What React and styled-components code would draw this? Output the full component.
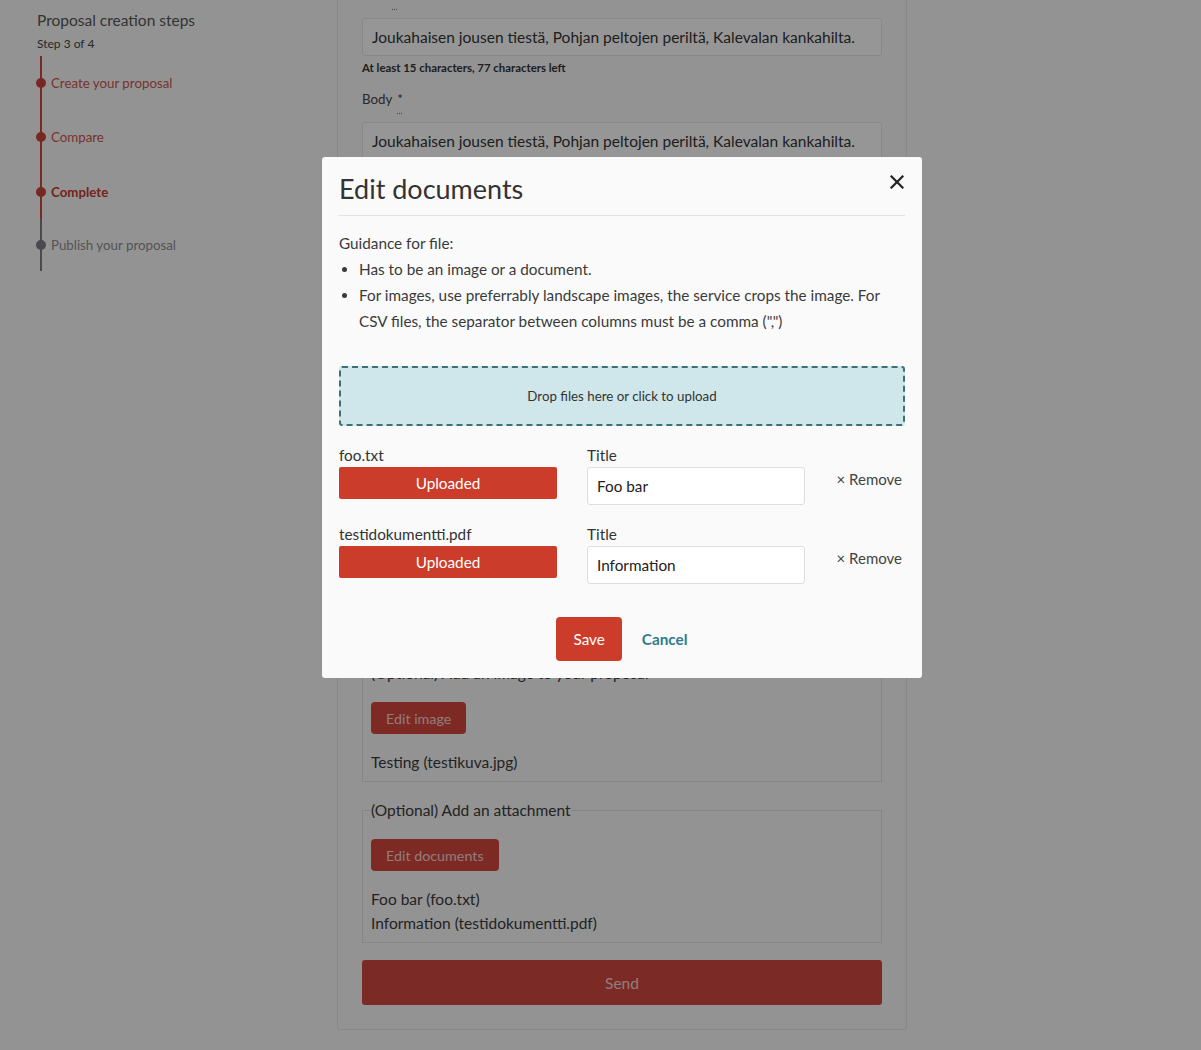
import React from "react";
import styled, { createGlobalStyle } from "styled-components";

const GlobalStyle = createGlobalStyle`
  html, body { margin: 0; padding: 0; }
  body {
    background: #f5f5f5;
    font-family: "Source Sans Pro", Lato, "Liberation Sans", sans-serif;
    color: #3a3a3a;
    overflow: hidden;
  }
  * { box-sizing: border-box; }
`;

const Page = styled.div`
  display: flex;
  align-items: flex-start;
  height: 1050px;
  padding-left: 37px;
`;

const Sidebar = styled.aside`
  width: 300px;
  padding-top: 9px;
`;

const SideTitle = styled.div`
  font-size: 15.5px;
  line-height: 22px;
  color: #555;
`;

const StepCount = styled.div`
  font-size: 12px;
  line-height: 16px;
  color: #444;
  margin-top: 5px;
  margin-bottom: 4px;
`;

const Steps = styled.ol`
  list-style: none;
  margin: 0;
  padding: 0;
`;

const Step = styled.li`
  position: relative;
  height: ${(p) => (p.$last ? "52px" : "54.3px")};
  display: flex;
  align-items: center;
  margin-left: 3px;
  padding-left: 9px;
  border-left: 2px solid ${(p) => (p.$done ? "#c9463d" : "#7a7a82")};
  font-size: 13.3px;
  font-weight: ${(p) => (p.$current ? 700 : 400)};
  color: ${(p) => (p.$current ? "#c23a30" : p.$done ? "#c8564c" : "#8c8c92")};
  &::before {
    content: "";
    position: absolute;
    left: -6px;
    top: 50%;
    margin-top: -5px;
    width: 10px;
    height: 10px;
    border-radius: 50%;
    background: ${(p) => (p.$done ? "#c8433a" : "#7a7a82")};
  }
`;

const Card = styled.main`
  width: 570px;
  margin-top: -40px;
  padding: 24px 24px 24px;
  background: #f5f5f5;
  border: 1px solid #e3e3e3;
  border-radius: 3px;
`;

const Label = styled.label`
  display: block;
  font-size: 13.3px;
  line-height: 20px;
  color: #444;
  margin-bottom: 13px;
  margin-top: ${(p) => (p.$spaced ? "13px" : "0")};
`;

const Req = styled.abbr`
  margin-left: 5px;
  text-decoration: underline dotted;
  text-underline-offset: 9px;
  text-decoration-color: #888;
`;

const TextInput = styled.div`
  height: ${(p) => (p.$tall ? "480px" : "38px")};
  padding: 9px 9px;
  background: #fbfbfb;
  border: 1px solid #e3e3e3;
  border-radius: 3px;
  font-size: 15.5px;
  line-height: 19px;
  color: #333;
`;

const Help = styled.div`
  margin-top: 4px;
  font-size: 11.4px;
  line-height: 16px;
  font-weight: 700;
  color: #333;
`;

const Fieldset = styled.fieldset`
  margin: ${(p) => (p.$first ? "39px" : "16px")} 0 0;
  padding: 17px 8px 7px;
  border: 1px solid #e0e0e0;
  min-width: 0;
`;

const Legend = styled.legend`
  padding: 0;
  font-size: 15.5px;
  line-height: 24px;
  color: #3a3a3a;
`;

const SmallButton = styled.button`
  display: inline-flex;
  align-items: center;
  height: 32px;
  padding: 0 15px;
  border: 0;
  border-radius: 4px;
  background: #d0463e;
  color: rgba(255, 255, 255, 0.75);
  font: inherit;
  font-size: 14.3px;
`;

const FileLine = styled.div`
  font-size: 15.5px;
  line-height: 24px;
  color: #3a3a3a;
  margin-top: ${(p) => (p.$gap ? "16px" : "0")};
`;

const SendButton = styled.button`
  display: block;
  width: 100%;
  height: 45px;
  margin-top: 17px;
  border: 0;
  border-radius: 3px;
  background: #cf463e;
  color: rgba(255, 255, 255, 0.75);
  font: inherit;
  font-size: 15.5px;
`;

const Overlay = styled.div`
  position: fixed;
  inset: 0;
  background: rgba(0, 0, 0, 0.4);
  z-index: 10;
`;

const Modal = styled.div`
  position: absolute;
  top: 157px;
  left: 322px;
  width: 600px;
  padding: 15px 17px 17px;
  background: #fafafa;
  border-radius: 3px;
  color: #3a3a3a;
`;

const ModalHeader = styled.div`
  padding-bottom: 9px;
  border-bottom: 1px solid #e2e2e2;
`;

const ModalTitle = styled.h2`
  margin: 0;
  font-size: 27px;
  line-height: 34px;
  font-weight: 400;
  color: #333;
`;

const CloseButton = styled.button`
  position: absolute;
  top: 17px;
  right: 17px;
  width: 16px;
  height: 16px;
  padding: 0;
  border: 0;
  background: none;
  color: #222;
  display: flex;
  align-items: center;
  justify-content: center;
`;

const Guidance = styled.div`
  margin-top: 14px;
  font-size: 15.3px;
  line-height: 26px;
`;

const Bullets = styled.ul`
  margin: 0;
  padding-left: 20px;
  li::marker { font-size: 15px; }
`;

const DropZone = styled.div`
  margin-top: 32px;
  height: 60px;
  display: flex;
  align-items: center;
  justify-content: center;
  background: #cfe6ea;
  border: 2px dashed #3d7178;
  border-radius: 3px;
  font-size: 13.3px;
  color: #333;
`;

const FileRow = styled.div`
  display: grid;
  grid-template-columns: 218px 218px 1fr;
  column-gap: 30px;
  margin-top: 19px;
`;

const FieldLabel = styled.div`
  font-size: 15.3px;
  line-height: 20px;
  margin-bottom: 2px;
  color: #333;
  white-space: nowrap;
`;

const UploadBar = styled.div`
  height: 32px;
  display: flex;
  align-items: center;
  justify-content: center;
  background: #cc3c2a;
  border-radius: 2px;
  color: #fff;
  font-size: 15.3px;
`;

const TitleInput = styled.input`
  display: block;
  width: 100%;
  height: 38px;
  padding: 0 9px;
  background: #fff;
  border: 1px solid #dedede;
  border-radius: 3px;
  font: inherit;
  font-size: 15.3px;
  color: #222;
  outline: none;
`;

const RemoveCell = styled.div`
  padding-top: 24px;
  padding-right: 3px;
  display: flex;
  justify-content: flex-end;
`;

const RemoveLink = styled.span`
  font-size: 15px;
  line-height: 20px;
  color: #444;
  white-space: nowrap;
`;

const Actions = styled.div`
  display: flex;
  justify-content: center;
  align-items: center;
  gap: 20px;
  margin-top: 33px;
`;

const SaveButton = styled.button`
  height: 44px;
  padding: 0 17px;
  border: 0;
  border-radius: 4px;
  background: #cc3c2a;
  color: #fff;
  font: inherit;
  font-size: 15.3px;
`;

const CancelLink = styled.button`
  padding: 0;
  border: 0;
  background: none;
  font: inherit;
  font-size: 15.3px;
  font-weight: 700;
  color: #2f7d8c;
`;

const files = [
  { name: "foo.txt", title: "Foo bar" },
  { name: "testidokumentti.pdf", title: "Information" },
];

export default function App() {
  const joukahainen =
    "Joukahaisen jousen tiestä, Pohjan peltojen periltä, Kalevalan kankahilta.";
  return (
    <>
      <GlobalStyle />
      <Page>
        <Sidebar>
          <SideTitle>Proposal creation steps</SideTitle>
          <StepCount>Step 3 of 4</StepCount>
          <Steps>
            <Step $done>Create your proposal</Step>
            <Step $done>Compare</Step>
            <Step $done $current>Complete</Step>
            <Step $last>Publish your proposal</Step>
          </Steps>
        </Sidebar>
        <Card>
          <Label>
            Title<Req title="required">*</Req>
          </Label>
          <TextInput>{joukahainen}</TextInput>
          <Help>At least 15 characters, 77 characters left</Help>
          <Label $spaced>
            Body<Req title="required">*</Req>
          </Label>
          <TextInput $tall>{joukahainen}</TextInput>
          <Help>At least 15 characters</Help>
          <Fieldset $first>
            <Legend>(Optional) Add an image to your proposal</Legend>
            <SmallButton>Edit image</SmallButton>
            <FileLine $gap>Testing (testikuva.jpg)</FileLine>
          </Fieldset>
          <Fieldset>
            <Legend>(Optional) Add an attachment</Legend>
            <SmallButton>Edit documents</SmallButton>
            <FileLine $gap>Foo bar (foo.txt)</FileLine>
            <FileLine>Information (testidokumentti.pdf)</FileLine>
          </Fieldset>
          <SendButton>Send</SendButton>
        </Card>
      </Page>
      <Overlay>
        <Modal role="dialog">
          <ModalHeader>
            <ModalTitle>Edit documents</ModalTitle>
          </ModalHeader>
          <CloseButton aria-label="Close">
            <svg width="14" height="14" viewBox="0 0 14 14">
              <path d="M1.5 1.5 L12.5 12.5 M12.5 1.5 L1.5 12.5" stroke="currentColor" strokeWidth="2.2" strokeLinecap="square" />
            </svg>
          </CloseButton>
          <Guidance>
            Guidance for file:
            <Bullets>
              <li>Has to be an image or a document.</li>
              <li>
                For images, use preferrably landscape images, the service crops the image. For
                CSV files, the separator between columns must be a comma (",")
              </li>
            </Bullets>
          </Guidance>
          <DropZone>Drop files here or click to upload</DropZone>
          {files.map((f) => (
            <FileRow key={f.name}>
              <div>
                <FieldLabel>{f.name}</FieldLabel>
                <UploadBar>Uploaded</UploadBar>
              </div>
              <div>
                <FieldLabel>Title</FieldLabel>
                <TitleInput defaultValue={f.title} />
              </div>
              <RemoveCell>
                <RemoveLink>× Remove</RemoveLink>
              </RemoveCell>
            </FileRow>
          ))}
          <Actions>
            <SaveButton>Save</SaveButton>
            <CancelLink>Cancel</CancelLink>
          </Actions>
        </Modal>
      </Overlay>
    </>
  );
}
